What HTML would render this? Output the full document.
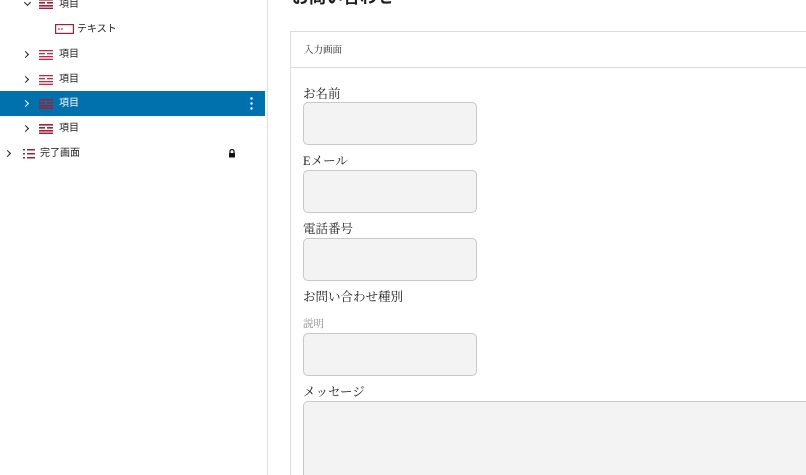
<!DOCTYPE html>
<html style="width:806px;height:475px;overflow:hidden"><head><meta charset="utf-8"><style>
*{box-sizing:border-box;margin:0;padding:0}
body{width:806px;height:475px;overflow:hidden;background:#fff;position:relative;font-family:"Liberation Sans","Noto Sans CJK JP",sans-serif;color:#1e1e1e}
.side{position:absolute;left:0;top:0;width:268px;height:475px;border-right:1px solid #e0e0e0}
.row{position:absolute;left:0;width:265px;height:25px;font-size:10px;line-height:25px}
.row.sel{background:#0071ad;color:#fff}
.row span{position:absolute;top:0}
.chev{position:absolute;width:5px;height:5px;border-right:1.5px solid #1e1e1e;border-bottom:1.5px solid #1e1e1e}
.sel .chev{border-color:#fff}
.ico{position:absolute;width:14px;height:10px}
.abs{position:absolute}
.lbl{position:absolute;left:303px;font-family:"Liberation Serif","Noto Serif CJK JP",serif;font-size:12.5px;color:#1e1e1e}
.inp{position:absolute;left:303px;width:174px;height:43px;background:#f3f3f3;border:1px solid #c8c8c8;border-radius:5px}
</style></head><body>
<div class="side">
 <div class="row" style="top:-8px"><div class="chev" style="left:25px;top:8px;transform:rotate(45deg)"></div>
  <svg class="ico" style="left:39px;top:7px" viewBox="0 0 14 10"><g fill="#a31f34"><rect x="0" y="0" width="14" height="1.6"/><rect x="0" y="3" width="6" height="1.6"/><rect x="8" y="3" width="6" height="1.6"/><rect x="0" y="6" width="14" height="1.6"/><rect x="0" y="8.6" width="14" height="1.4"/></g></svg><span style="left:59px">項目</span></div>
 <div class="row" style="top:17px"><svg class="abs" style="left:55px;top:7px" width="19" height="10" viewBox="0 0 19 10"><rect x="0.6" y="0.6" width="17.8" height="8.8" fill="none" stroke="#a31f34" stroke-width="1.2"/><rect x="3" y="4.5" width="2" height="1" fill="#a31f34"/><rect x="6" y="4.5" width="2" height="1" fill="#a31f34"/></svg><span style="left:77px">テキスト</span></div>
 <div class="row" style="top:42px"><div class="chev" style="left:23px;top:10px;transform:rotate(-45deg)"></div>
  <svg class="ico" style="left:39px;top:8px" viewBox="0 0 14 10"><g fill="#c8273f"><rect x="0" y="0" width="14" height="1.3"/><rect x="0" y="3" width="6" height="1.3"/><rect x="8" y="3" width="6" height="1.3"/><rect x="0" y="6" width="14" height="1.3"/><rect x="0" y="8.7" width="14" height="1.3"/></g></svg><span style="left:59px">項目</span></div>
 <div class="row" style="top:67px"><div class="chev" style="left:23px;top:10px;transform:rotate(-45deg)"></div>
  <svg class="ico" style="left:39px;top:8px" viewBox="0 0 14 10"><g fill="#c8273f"><rect x="0" y="0" width="14" height="1.3"/><rect x="0" y="3" width="6" height="1.3"/><rect x="8" y="3" width="6" height="1.3"/><rect x="0" y="6" width="14" height="1.3"/><rect x="0" y="8.7" width="14" height="1.3"/></g></svg><span style="left:59px">項目</span></div>
 <div class="row sel" style="top:91px"><div class="chev" style="left:23px;top:10px;transform:rotate(-45deg)"></div>
  <svg class="ico" style="left:39px;top:8px" viewBox="0 0 14 10"><g fill="#a31f34"><rect x="0" y="0" width="14" height="1.6"/><rect x="0" y="3" width="6" height="1.6"/><rect x="8" y="3" width="6" height="1.6"/><rect x="0" y="6" width="14" height="1.6"/><rect x="0" y="8.5" width="14" height="1.5"/></g></svg><span style="left:59px">項目</span>
  <svg class="abs" style="left:250px;top:6px" width="3" height="13"><circle cx="1.5" cy="1.5" r="1.2" fill="#fff"/><circle cx="1.5" cy="6.5" r="1.2" fill="#fff"/><circle cx="1.5" cy="11.5" r="1.2" fill="#fff"/></svg></div>
 <div class="row" style="top:116px"><div class="chev" style="left:23px;top:10px;transform:rotate(-45deg)"></div>
  <svg class="ico" style="left:39px;top:8px" viewBox="0 0 14 10"><g fill="#a31f34"><rect x="0" y="0" width="14" height="1.6"/><rect x="0" y="3" width="6" height="1.6"/><rect x="8" y="3" width="6" height="1.6"/><rect x="0" y="6" width="14" height="1.6"/><rect x="0" y="8.5" width="14" height="1.5"/></g></svg><span style="left:59px">項目</span></div>
 <div class="row" style="top:141px"><div class="chev" style="left:5px;top:10px;transform:rotate(-45deg)"></div>
  <svg class="abs" style="left:23px;top:8px" width="12" height="10"><g fill="#a31f34"><rect x="0" y="0" width="2" height="1.5"/><rect x="4" y="0" width="8" height="1.5"/><rect x="0" y="4" width="2" height="1.5"/><rect x="4" y="4" width="8" height="1.5"/><rect x="0" y="8" width="2" height="1.5"/><rect x="4" y="8" width="8" height="1.5"/></g></svg><span style="left:40px">完了画面</span>
  <svg class="abs" style="left:228px;top:8px" width="8" height="9"><path d="M2 4V2.5a2 2 0 0 1 4 0V4" fill="none" stroke="#111" stroke-width="1.2"/><rect x="1" y="4" width="6" height="4.5" fill="#111"/></svg></div>
</div>
<div class="abs" style="left:292px;top:-17px;font-size:17px;font-weight:bold">お問い合わせ</div>
<div class="abs" style="left:290px;top:31px;width:530px;height:460px;border:1px solid #dcdcdc"></div>
<div class="abs" style="left:290px;top:67px;width:530px;height:1px;background:#dcdcdc"></div>
<div class="abs" style="left:304px;top:42px;font-size:9.5px;font-family:'Liberation Serif','Noto Serif CJK JP',serif">入力画面</div>
<div class="lbl" style="top:84px">お名前</div>
<div class="inp" style="top:102px"></div>
<div class="lbl" style="top:151px">Eメール</div>
<div class="inp" style="top:170px"></div>
<div class="lbl" style="top:219px">電話番号</div>
<div class="inp" style="top:238px"></div>
<div class="lbl" style="top:287px">お問い合わせ種別</div>
<div class="lbl" style="top:316px;font-size:10.5px;color:#8a8a8a">説明</div>
<div class="inp" style="top:333px"></div>
<div class="lbl" style="top:382px">メッセージ</div>
<div class="inp" style="top:401px;width:520px;height:74px;border-bottom:none;border-radius:5px 5px 0 0"></div>
</body></html>
